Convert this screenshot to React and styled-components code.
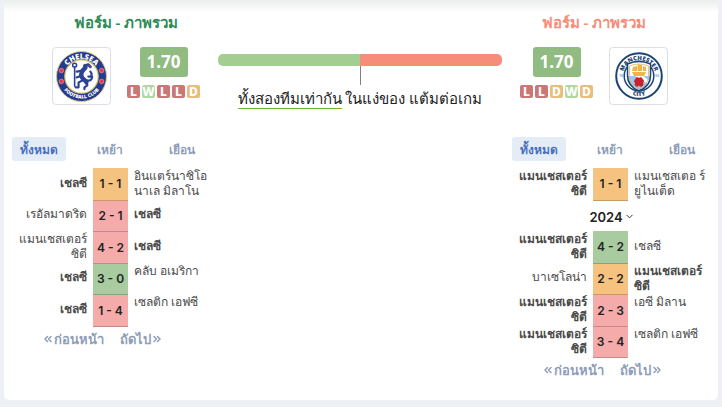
import { useState } from "react";
import styled, { createGlobalStyle } from "styled-components";
import { ChevronDown, ChevronsLeft, ChevronsRight } from "lucide-react";

const CHELSEA = "เชลซี";
const CITY = "แมนเชสเตอร์ ซิตี";

const homeMatches = [
  { home: CHELSEA, score: "1 - 1", away: "อินแตร์นาซิโอ นาเล มิลาโน", result: "draw" },
  { home: "เรอัลมาดริด", score: "2 - 1", away: CHELSEA, result: "loss" },
  { home: CITY, score: "4 - 2", away: CHELSEA, result: "loss" },
  { home: CHELSEA, score: "3 - 0", away: "คลับ อเมริกา", result: "win" },
  { home: CHELSEA, score: "1 - 4", away: "เซลติก เอฟซี", result: "loss" },
];

const awayMatches = [
  { home: CITY, score: "1 - 1", away: "แมนเชสเตอ ร์ ยูไนเต็ด", result: "draw" },
  { year: "2024" },
  { home: CITY, score: "4 - 2", away: CHELSEA, result: "win" },
  { home: "บาเซโลน่า", score: "2 - 2", away: CITY, result: "draw" },
  { home: CITY, score: "2 - 3", away: "เอซี มิลาน", result: "loss" },
  { home: CITY, score: "3 - 4", away: "เซลติก เอฟซี", result: "loss" },
];

const tabs = ["ทั้งหมด", "เหย้า", "เยือน"];

const badgeColors = { L: "#cb7777", W: "#b1d8a3", D: "#e9bd7c" };

const resultColors = {
  win: ["#a8cb9f", "#86a27f"],
  draw: ["#f5c280", "#c49b66"],
  loss: ["#f5abaa", "#c48988"],
};

export default function App() {
  return (
    <>
      <GlobalStyle />
      <Page>
        <Card>
          <Summary>
            <Team>
              <TeamTitle $color="#2e8b57">ฟอร์ม - ภาพรวม</TeamTitle>
              <TeamBody>
                <Logo>
                  <ChelseaLogo />
                </Logo>
                <Form points="1.70" results="LWLLD" />
              </TeamBody>
            </Team>
            <Comparison>
              <Bar>
                <BarHalf $color="#a3cd91" />
                <BarHalf $color="#f68d78" />
              </Bar>
              <Marker />
              <Verdict>
                <u>ทั้งสองทีมเท่ากัน</u> ในแง่ของ แต้มต่อเกม
              </Verdict>
            </Comparison>
            <Team>
              <TeamTitle $color="#f68d78">ฟอร์ม - ภาพรวม</TeamTitle>
              <TeamBody>
                <Form points="1.70" results="LLDWD" />
                <Logo>
                  <CityLogo />
                </Logo>
              </TeamBody>
            </Team>
          </Summary>
          <Columns>
            <Results team={CHELSEA} matches={homeMatches} />
            <Results team={CITY} matches={awayMatches} />
          </Columns>
        </Card>
      </Page>
    </>
  );
}

function Form({ points, results }) {
  return (
    <FormBox>
      <Points>{points}</Points>
      <Badges>
        {results.split("").map((r, i) => (
          <Badge key={i} $color={badgeColors[r]}>
            {r}
          </Badge>
        ))}
      </Badges>
    </FormBox>
  );
}

function Results({ team, matches }) {
  const [active, setActive] = useState(0);

  return (
    <ResultsBox>
      <Tabs>
        {tabs.map((tab, i) => (
          <Tab key={tab} $active={i === active} onClick={() => setActive(i)}>
            {tab}
          </Tab>
        ))}
      </Tabs>
      <Table>
        <colgroup>
          <col width="81" />
          <col width="35" />
          <col />
        </colgroup>
        <tbody>
          {matches.map((match, i) =>
            match.year ? (
              <Row key={i}>
                <td colSpan={3}>
                  <YearButton>
                    {match.year}
                    <ChevronDown size={11} strokeWidth={2} />
                  </YearButton>
                </td>
              </Row>
            ) : (
              <Row key={i}>
                <HomeName
                  $bold={match.home === team}
                  $top={match.home.includes(" ")}
                >
                  {match.home}
                </HomeName>
                <Score $colors={resultColors[match.result]}>{match.score}</Score>
                <AwayName
                  $bold={match.away === team}
                  $top={match.away.includes(" ")}
                >
                  {match.away}
                </AwayName>
              </Row>
            )
          )}
        </tbody>
      </Table>
      <Pager>
        <PageButton>
          <ChevronsLeft size={12} strokeWidth={3} />
          ก่อนหน้า
        </PageButton>
        <PageButton>
          ถัดไป
          <ChevronsRight size={12} strokeWidth={3} />
        </PageButton>
      </Pager>
    </ResultsBox>
  );
}

function ChelseaLogo() {
  return (
    <svg width="53" height="53" viewBox="-1 -1 54 54" role="img" aria-label="Chelsea">
      <defs>
        <path id="chelseaTop" d="M8 26a18 18 0 0 1 36 0" />
        <path id="chelseaBottom" d="M3.500 26a22.500 22.500 0 0 0 45 0" />
      </defs>
      <circle cx="26" cy="26" r="25.500" fill="#253b8e" stroke="#d8c98a" />
      <circle cx="26" cy="26" r="17" fill="#fff" stroke="#d9c36a" strokeWidth="1.2" />
      <text fontFamily="Open Sans, sans-serif" fontWeight="800" fontSize="7.500" fill="#fff" textAnchor="middle">
        <textPath href="#chelseaTop" startOffset="50%">CHELSEA</textPath>
      </text>
      <text fontFamily="Open Sans, sans-serif" fontWeight="800" fontSize="5" fill="#fff" textAnchor="middle">
        <textPath href="#chelseaBottom" startOffset="50%">FOOTBALL CLUB</textPath>
      </text>
      <g fill="#e8374a" stroke="#f6a7ae" strokeWidth=".6">
        <circle cx="5.500" cy="20" r="2.3" />
        <circle cx="5.500" cy="31" r="2.3" />
        <circle cx="46.500" cy="20" r="2.3" />
        <circle cx="46.500" cy="31" r="2.3" />
      </g>
      <g fill="none" stroke="#2b4396" strokeLinecap="round" strokeLinejoin="round">
        <path strokeWidth="1.6" d="M19 16v20M17 14.500a2 2 0 1 1 4 0a2 2 0 1 1-4 0" />
        <path strokeWidth="4.500" d="M30 17c-3 3-5 5-4 9c1 3 4 3 5 6" />
        <path strokeWidth="2.200" d="M27 20l-6 1M26 25l-5 2M27 30l-4 2v5h-3M31 32l1 3-3 2v2M33 26c4 1 4-3 2-5M32 30c4 1 6-3 4-6" />
        <path strokeWidth="3" d="M29 15l4-1 2 2" />
      </g>
      <path d="M33 14.500l3 .5-1 1z" fill="#e8374a" />
    </svg>
  );
}

function CityLogo() {
  return (
    <svg width="48" height="50" viewBox="0 0 48 50" role="img" aria-label="Manchester City">
      <defs>
        <path id="cityTop" d="M7.500 25.500a16.500 16.500 0 0 1 33 0" />
        <path id="cityBottom" d="M3.500 24.500a20.500 20.500 0 0 0 41 0" />
        <clipPath id="cityShield">
          <path d="M12.500 13q11.500-5 23 0v12q0 10-11.500 15q-11.500-5-11.500-15z" />
        </clipPath>
      </defs>
      <circle cx="24" cy="25" r="22.800" fill="#fff" stroke="#1c4374" strokeWidth="2" />
      <circle cx="24" cy="25" r="14.800" fill="#fff" stroke="#1c4374" strokeWidth="1.500" />
      <text fontFamily="Open Sans, sans-serif" fontWeight="800" fontSize="6" fill="#1c4374" textAnchor="middle">
        <textPath href="#cityTop" startOffset="50%">MANCHESTER</textPath>
      </text>
      <text fontFamily="Open Sans, sans-serif" fontWeight="800" fontSize="6" fill="#1c4374" textAnchor="middle">
        <textPath href="#cityBottom" startOffset="50%">CITY</textPath>
      </text>
      <g fontFamily="Open Sans, sans-serif" fontWeight="800" fontSize="3.500" fill="#86bfe3" textAnchor="middle">
        <text x="6" y="26">18</text>
        <text x="42" y="26">94</text>
      </g>
      <g clipPath="url(#cityShield)">
        <path d="M10 8h28v34H10z" fill="#fff" />
        <path d="M10 25h28v17H10z" fill="#98c9ea" />
        <path d="M10 30L28 42h-5L10 34zM20 25l16 10v-4l-8-6z" fill="#fff" />
      </g>
      <path d="M12.500 13q11.500-5 23 0v12q0 10-11.500 15q-11.500-5-11.500-15z" fill="none" stroke="#1c4374" strokeWidth="1.500" />
      <path d="M14.500 15q9.500-4 19 0v10q0 8.500-9.500 13q-9.500-4.500-9.500-13z" fill="none" stroke="#d9b65e" strokeWidth=".8" />
      <path d="M17 21h14l-2 4H19zM18 16l4-1v5h-5zM22.500 13l4.500 1v6h-4.500zM28 15l3 1v4h-3z" fill="#efb548" />
      <path d="M24 27a2 2 0 0 1 3.500 1a2.300 2.300 0 0 1 .5 4a2.300 2.300 0 0 1-4 2.500a2.300 2.300 0 0 1-4-2.500a2.300 2.300 0 0 1 .5-4a2 2 0 0 1 3.500-1z" fill="#c8202f" />
    </svg>
  );
}

const GlobalStyle = createGlobalStyle`
  * {
    box-sizing: border-box;
  }
  body {
    margin: 0;
    background-color: #edf1f5;
    font-family: "Noto Sans", sans-serif;
    color: #222222;
  }
  button {
    border: none;
    padding: 0;
    background: none;
    font-family: inherit;
    cursor: pointer;
  }
`;
const Page = styled.main`
  padding: 0 4px 7px;
`;
const Card = styled.section`
  padding: 12px 6px 20px 8px;
  border-radius: 0 0 5px 5px;
  background: linear-gradient(#eaeeed, #ffffff 12px);
`;
const Summary = styled.div`
  display: grid;
  grid-template-columns: 160px 1fr 160px;
  padding: 0 38px 0 34px;
`;
const Team = styled.div`
  display: flex;
  flex-direction: column;
  gap: 15px;
`;
const TeamTitle = styled.h2`
  margin: 0;
  font-size: 15px;
  line-height: 20px;
  font-weight: 600;
  text-align: center;
  white-space: nowrap;
  color: ${({ $color }) => $color};
`;
const TeamBody = styled.div`
  display: flex;
  justify-content: center;
  gap: 16px;
`;
const Logo = styled.div`
  display: flex;
  align-items: center;
  justify-content: center;
  flex-shrink: 0;
  width: 59px;
  height: 58px;
  border: 1px solid #dddfe8;
  border-radius: 4px;
`;
const FormBox = styled.div`
  display: flex;
  flex-direction: column;
  align-items: center;
  gap: 8px;
`;
const Points = styled.div`
  width: 48px;
  border-radius: 3px;
  background-color: #90bc81;
  color: white;
  font-weight: 700;
  font-size: 17px;
  line-height: 30px;
  text-align: center;
`;
const Badges = styled.div`
  display: flex;
  gap: 2px;
`;
const Badge = styled.span`
  width: 13px;
  border-radius: 2px;
  background-color: ${({ $color }) => $color};
  color: white;
  font-weight: 800;
  font-size: 12px;
  line-height: 13px;
  text-align: center;
`;
const Comparison = styled.div`
  display: flex;
  flex-direction: column;
  align-items: center;
  padding: 42px 12px 0;
`;
const Bar = styled.div`
  display: flex;
  width: 100%;
  height: 12px;
  border-radius: 5px;
  overflow: hidden;
`;
const BarHalf = styled.div`
  flex: 1;
  background-color: ${({ $color }) => $color};
`;
const Marker = styled.div`
  width: 1px;
  height: 19px;
  background-color: #808080;
`;
const Verdict = styled.p`
  margin: 4px 0 0;
  font-size: 15px;
  line-height: 19px;
  white-space: nowrap;

  u {
    display: inline-block;
    text-decoration: none;
    border-bottom: 1px solid #6fb53c;
  }
`;
const Columns = styled.div`
  display: flex;
  justify-content: space-between;
  margin-top: 28px;
`;
const ResultsBox = styled.div`
  width: 200px;
`;
const Tabs = styled.div`
  display: grid;
  grid-template-columns: 54px 88px 56px;
  justify-items: center;
  margin-bottom: 7px;
`;
const Tab = styled.button`
  height: 24px;
  width: 54px;
  border-radius: 3px;
  background-color: ${({ $active }) => ($active ? "#e4ecf6" : "transparent")};
  color: ${({ $active }) => ($active ? "#4a70bd" : "#8e9db8")};
  font-weight: 600;
  font-size: 12px;
`;
const Table = styled.table`
  width: 100%;
  border-collapse: collapse;
  table-layout: fixed;

  td {
    padding: 0;
    text-align: center;
  }
`;
const Row = styled.tr`
  height: 31px;

  &:nth-child(odd) {
    height: 32px;
  }
`;
const Name = styled.td`
  color: #4a4a4a;
  font-size: 12px;
  line-height: 15px;
  font-weight: ${({ $bold }) => ($bold ? 700 : 400)};
  vertical-align: ${({ $top }) => ($top ? "top" : "middle")};

  && {
    padding-bottom: ${({ $top }) => ($top ? 0 : 4)}px;
  }
`;
const HomeName = styled(Name)`
  && {
    padding-right: 6px;
    text-align: right;
  }
`;
const AwayName = styled(Name)`
  && {
    padding-left: 6px;
    text-align: left;
  }
`;
const Score = styled.td`
  border-bottom: 1px solid ${({ $colors }) => $colors[1]};
  background-color: ${({ $colors }) => $colors[0]};
  font-family: Inter, sans-serif;
  font-weight: 600;
  font-size: 12px;
  white-space: nowrap;
`;
const YearButton = styled.button`
  display: inline-flex;
  align-items: center;
  gap: 1px;
  color: #222222;

  && {
    font-family: Inter, sans-serif;
  }
  font-weight: 600;
  font-size: 13px;
`;
const Pager = styled.div`
  display: flex;
  gap: 16px;
  padding: 2px 0 0 30px;
`;
const PageButton = styled.button`
  display: flex;
  align-items: center;
  color: #8e9db8;
  font-weight: 600;
  font-size: 13px;
  line-height: 20px;
  white-space: nowrap;
`;
